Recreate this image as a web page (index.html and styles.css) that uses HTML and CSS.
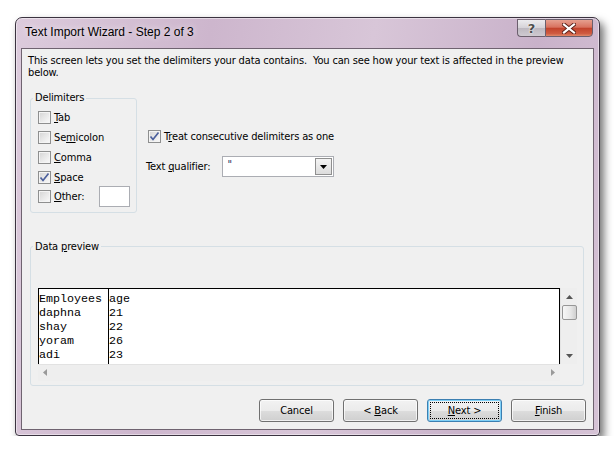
FILE: index.html
```html
<!DOCTYPE html>
<html>
<head>
  <title>Text Import Wizard</title>
  <link rel="stylesheet" href="styles.css">
</head>
<body>
  <div class="window">
    <!-- caption -->
    <div class="titlebar">
      <span class="title">Text Import Wizard - Step 2 of 3</span>
      <div class="caption-btns">
        <span class="cap help">?</span>
        <span class="cap close">
          <svg width="14" height="11" viewBox="0 0 14 11">
            <path d="M2 1.5 L12 9.5 M12 1.5 L2 9.5" stroke="#5a1f17" stroke-width="4" stroke-linecap="square"/>
            <path d="M2 1.5 L12 9.5 M12 1.5 L2 9.5" stroke="#fff" stroke-width="2.2" stroke-linecap="square"/>
          </svg>
        </span>
      </div>
    </div>

    <div class="client">
      <p class="desc">This screen lets you set the delimiters your data contains.&nbsp; You can see how your text is affected in the preview<br>below.</p>

      <div class="options">
        <fieldset class="group delims">
          <legend>Delimiters</legend>
          <div class="check"><span class="box"></span><span><u>T</u>ab</span></div>
          <div class="check"><span class="box"></span><span>Se<u>m</u>icolon</span></div>
          <div class="check"><span class="box"></span><span><u>C</u>omma</span></div>
          <div class="check"><span class="box checked"><svg width="11" height="11" viewBox="0 0 11 11"><path d="M1.5 5.5 L4 8.5 L9.5 1.5" fill="none" stroke="#4b5f9c" stroke-width="1.7"/></svg></span><span><u>S</u>pace</span></div>
          <div class="check"><span class="box"></span><span><u>O</u>ther:</span><span class="textbox other-input"></span></div>
        </fieldset>

        <div class="opts-right">
          <div class="check treat"><span class="box checked"><svg width="11" height="11" viewBox="0 0 11 11"><path d="M1.5 5.5 L4 8.5 L9.5 1.5" fill="none" stroke="#4b5f9c" stroke-width="1.7"/></svg></span><span>T<u>r</u>eat consecutive delimiters as one</span></div>
          <div class="qualifier">
            <span>Text <u>q</u>ualifier:</span>
            <div class="combo">
              <span class="combo-val">"</span>
              <span class="combo-btn">
                <svg width="7" height="4" viewBox="0 0 7 4"><path d="M0 0 H7 L3.5 4 Z" fill="#000"/></svg>
              </span>
            </div>
          </div>
        </div>
      </div>

      <fieldset class="group preview">
        <legend>Data <u>p</u>review</legend>
        <div class="preview-grid">
          <div class="sheet">
            <div class="col c1">
              <div>Employees</div>
              <div>daphna</div>
              <div>shay</div>
              <div>yoram</div>
              <div>adi</div>
            </div>
            <div class="col">
              <div>age</div>
              <div>21</div>
              <div>22</div>
              <div>26</div>
              <div>23</div>
            </div>
          </div>
          <div class="vscroll">
            <svg width="7" height="4" viewBox="0 0 7 4"><path d="M3.5 0 L7 4 H0 Z" fill="#555"/></svg>
            <span class="thumb"></span>
            <span class="spacer"></span>
            <svg width="7" height="4" viewBox="0 0 7 4"><path d="M0 0 H7 L3.5 4 Z" fill="#555"/></svg>
          </div>
          <div class="hscroll">
            <svg width="4" height="7" viewBox="0 0 4 7"><path d="M4 0 V7 L0 3.5 Z" fill="#999"/></svg>
            <svg width="4" height="7" viewBox="0 0 4 7"><path d="M0 0 V7 L4 3.5 Z" fill="#999"/></svg>
          </div>
          <div class="corner"></div>
        </div>
      </fieldset>

      <div class="buttons">
        <button class="btn">Cancel</button>
        <button class="btn">&lt; <u>B</u>ack</button>
        <button class="btn default"><span class="focus"><u>N</u>ext &gt;</span></button>
        <button class="btn"><u>F</u>inish</button>
      </div>
    </div>
  </div>
</body>
</html>
```

FILE: styles.css
```css
body {
  margin: 0;
  background-color: #fff;
  font-family: "DejaVu Sans Condensed", "Liberation Sans", sans-serif;
  font-size: 11px;
  letter-spacing: -0.15px;
  color: #000;
}

/* window frame */
.window {
  width: 585px;
  box-sizing: border-box;
  margin: 17px 0 0 15px;
  padding: 0 5px 5px 5px;
  border: 1px solid #3b3340;
  border-radius: 7px 7px 4px 4px;
  background: linear-gradient(100deg, #dccbdc 0%, #cdb6cd 30%, #d8c6d8 55%, #c9b2ca 80%, #d6c3d6 100%);
  box-shadow: inset 0 0 0 1px rgba(255,255,255,0.45), 4px 5px 8px rgba(0,0,0,0.55);
}

.titlebar {
  height: 30px;
  display: flex;
  align-items: flex-start;
}

.title {
  padding-left: 4px;
  line-height: 29px;
  font-family: "Liberation Sans", sans-serif;
  font-size: 12px;
  letter-spacing: 0;
  color: #000;
  text-shadow: 0 0 6px rgba(255,255,255,0.9);
}

.caption-btns {
  margin-left: auto;
  margin-right: 1px;
  margin-top: 1px;
  display: flex;
}

.cap {
  height: 18px;
  box-sizing: border-box;
  border: 1px solid #6b5f6d;
  display: flex;
  align-items: center;
  justify-content: center;
}

.help {
  width: 28px;
  border-right: none;
  border-radius: 0 0 0 4px;
  background: linear-gradient(#ecebee 0%, #d6d3d8 48%, #bdb8c0 52%, #cfcad1 100%);
  font-family: "DejaVu Sans", sans-serif;
  font-size: 13px;
  font-weight: bold;
  color: #4d4d4d;
  text-shadow: 0 0 2px #fff, 0 0 1px #fff;
}

.close {
  width: 48px;
  border-radius: 0 0 4px 0;
  background: linear-gradient(#e6a08f 0%, #d8725f 45%, #c2432c 52%, #cf5c42 85%, #e08a6c 100%);
}

/* client area */
.client {
  border: 1px solid #6f6370;
  background: #f0f0f0;
  padding: 6px 0 0 0;
  height: 382px;
  box-sizing: border-box;
}

.desc {
  margin: 0;
  padding-left: 6px;
  line-height: 12px;
}

u {
  text-decoration: underline;
  text-underline-offset: 1px;
}

.options {
  display: flex;
  align-items: flex-start;
  margin-top: 13px;
}

.group {
  margin: 0 0 0 8px;
  border: 1px solid #d5dfe5;
  border-radius: 3px;
  box-sizing: border-box;
  min-width: 0;
}

.group legend {
  margin-left: -5px;
  padding: 0 2px;
  line-height: 12px;
}

.delims {
  width: 107px;
  padding: 4px 6px 5px 7px;
}

.check {
  height: 19.75px;
  display: flex;
  align-items: center;
}

.box {
  width: 13px;
  height: 13px;
  box-sizing: border-box;
  border: 1px solid #8e8f8f;
  margin-right: 3px;
  background: linear-gradient(135deg, #d4d4d4 0%, #e8e8e8 50%, #fafafa 100%);
  box-shadow: inset 0 0 0 1px #f4f4f4;
  display: flex;
  align-items: center;
  justify-content: center;
  flex: none;
}

.textbox {
  background: #fff;
  border: 1px solid #abadb3;
  box-sizing: border-box;
}

.other-input {
  width: 31px;
  height: 21px;
  margin-left: auto;
}

.opts-right {
  margin-left: 9px;
  padding-top: 34px;
}

.treat {
  height: 20px;
  margin-left: 2px;
}

.qualifier {
  margin-top: 10px;
  display: flex;
  align-items: center;
}

.combo {
  margin-left: 12px;
  width: 112px;
  height: 21px;
  box-sizing: border-box;
  border: 1px solid #abadb3;
  background: #fff;
  display: flex;
  align-items: center;
  padding: 0 1px 0 4px;
}

.combo-val {
  flex: 1;
  line-height: 12px;
  align-self: flex-start;
  padding-top: 2px;
  color: #1a2a5a;
}

.combo-btn {
  width: 17px;
  height: 17px;
  box-sizing: border-box;
  border: 1px solid #8f8f8f;
  background: linear-gradient(#f4f4f4, #dcdcdc);
  display: flex;
  align-items: center;
  justify-content: center;
}

/* data preview */
.preview {
  width: 554px;
  margin-top: 28px;
  padding: 35px 6px 4px 7px;
}

.preview-grid {
  display: grid;
  grid-template-columns: 522px 17px;
  grid-template-rows: 76px 17px;
}

.sheet {
  background: #fff;
  border: 1px solid #000;
  border-bottom: none;
  display: flex;
  font-family: "Liberation Mono", monospace;
  font-size: 11.67px;
  letter-spacing: 0;
  line-height: 14px;
  overflow: hidden;
}

.col {
  padding-top: 3px;
  white-space: nowrap;
}

.c1 {
  width: 70px;
  box-sizing: border-box;
  border-right: 1px solid #000;
}

.vscroll {
  background: #eeeeee;
  border-left: 1px solid #e4e4e4;
  display: flex;
  flex-direction: column;
  align-items: center;
  padding: 7px 0 6px;
  box-sizing: border-box;
}

.thumb {
  margin-top: 6px;
  width: 15px;
  height: 15px;
  box-sizing: border-box;
  border: 1px solid #979797;
  border-radius: 2px;
  background: linear-gradient(90deg, #f7f7f7, #e6e6e6 60%, #cfcfcf);
}

.spacer {
  flex: 1;
}

.hscroll {
  background: #eeeeee;
  border-top: 1px solid #e2e2e2;
  display: flex;
  align-items: center;
  justify-content: space-between;
  padding: 0 5px;
}

.corner {
  background: #f0f0f0;
}

/* push buttons */
.buttons {
  display: flex;
  justify-content: flex-end;
  gap: 9px;
  margin-top: 13px;
  padding-right: 7px;
}

.btn {
  width: 75px;
  height: 23px;
  margin: 0;
  padding: 0;
  border: 1px solid #707070;
  border-radius: 3px;
  background: linear-gradient(#f2f2f2 0%, #ebebeb 50%, #dddddd 51%, #cfcfcf 100%);
  box-shadow: inset 0 0 0 1px rgba(255,255,255,0.7);
  font-family: inherit;
  font-size: 11px;
  letter-spacing: inherit;
  color: #000;
}

.btn.default {
  border-color: #3c7fb1;
  box-shadow: inset 0 0 0 1px #7fd0f7;
  padding: 2px;
}

.focus {
  display: flex;
  align-items: center;
  justify-content: center;
  height: 100%;
  box-sizing: border-box;
  border: 1px dotted #000;
}
```
